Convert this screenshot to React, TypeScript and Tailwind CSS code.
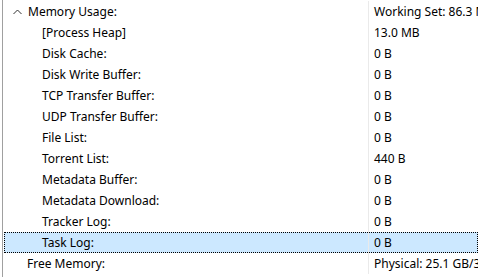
const rows: { label: string; value: string; level: 0 | 1 | 2; open?: boolean; selected?: boolean }[] = [
  { label: "Memory Usage:", value: "Working Set: 86.3 MB", level: 0, open: true },
  { label: "[Process Heap]", value: "13.0 MB", level: 1 },
  { label: "Disk Cache:", value: "0 B", level: 1 },
  { label: "Disk Write Buffer:", value: "0 B", level: 1 },
  { label: "TCP Transfer Buffer:", value: "0 B", level: 1 },
  { label: "UDP Transfer Buffer:", value: "0 B", level: 1 },
  { label: "File List:", value: "0 B", level: 1 },
  { label: "Torrent List:", value: "440 B", level: 1 },
  { label: "Metadata Buffer:", value: "0 B", level: 1 },
  { label: "Metadata Download:", value: "0 B", level: 1 },
  { label: "Tracker Log:", value: "0 B", level: 1 },
  { label: "Task Log:", value: "0 B", level: 1, selected: true },
  { label: "Free Memory:", value: "Physical: 25.1 GB/31.9 GB", level: 2 },
];

const Caret = () => (
  <svg width="9" height="6" viewBox="0 0 9 6" fill="none" stroke="#333" strokeWidth="1">
    <polyline points="0.5,5 4.5,1 8.5,5" />
  </svg>
);

export default function App() {
  return (
    <div className="w-[478px] h-[277px] overflow-hidden bg-white pl-[2px] font-['Noto_Sans',sans-serif] text-[12px] text-black">
      <div className="h-full border-l border-[#a0a0a0] pt-px pl-px">
        {rows.map((r, i) => (
          <div
            key={i}
            className={
              "flex h-[21px] items-center whitespace-nowrap " +
              (r.selected ? "bg-[#cce8ff] outline outline-1 outline-dotted outline-black -outline-offset-1" : "")
            }
          >
            <div className="flex w-[364px] shrink-0 items-center">
              {r.level === 0 ? (
                <div className="flex w-[24px] justify-end pr-[6px]">
                  <Caret />
                </div>
              ) : (
                <div className={r.level === 1 ? "w-[38px]" : "w-[23px]"} />
              )}
              <span>{r.label}</span>
            </div>
            <div className="h-full flex-1 border-l border-[#eaeaea] pl-[5px] leading-[21px]">{r.value}</div>
          </div>
        ))}
      </div>
    </div>
  );
}
